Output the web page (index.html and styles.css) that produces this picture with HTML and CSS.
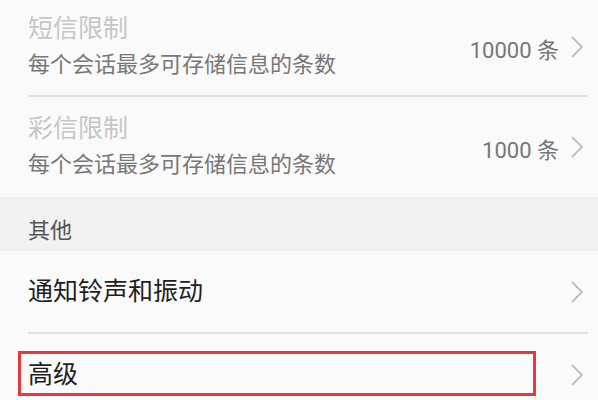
FILE: index.html
```html
<!DOCTYPE html>
<html lang="zh-CN">
<head>
<meta charset="utf-8">
<link rel="stylesheet" href="styles.css">
</head>
<body>
<div class="list">
  <div class="item two first">
    <div class="inner divided">
      <div class="text">
        <div class="title disabled">短信限制</div>
        <div class="sub">每个会话最多可存储信息的条数</div>
      </div>
      <div class="value">10000 条</div>
      <svg class="chev" width="12" height="22" viewBox="0 0 12 22"><polyline points="1,1 11,11 1,21" fill="none" stroke="#bdbdbd" stroke-width="1.8"/></svg>
    </div>
  </div>
  <div class="item two second">
    <div class="inner">
      <div class="text">
        <div class="title disabled">彩信限制</div>
        <div class="sub">每个会话最多可存储信息的条数</div>
      </div>
      <div class="value">1000 条</div>
      <svg class="chev" width="12" height="22" viewBox="0 0 12 22"><polyline points="1,1 11,11 1,21" fill="none" stroke="#bdbdbd" stroke-width="1.8"/></svg>
    </div>
  </div>
  <div class="section">其他</div>
  <div class="item one">
    <div class="inner divided">
      <div class="text"><div class="label">通知铃声和振动</div></div>
      <svg class="chev" width="12" height="22" viewBox="0 0 12 22"><polyline points="1,1 11,11 1,21" fill="none" stroke="#bdbdbd" stroke-width="1.8"/></svg>
    </div>
  </div>
  <div class="item one highlight-row">
    <div class="inner">
      <div class="text"><div class="label">高级</div></div>
      <svg class="chev" width="12" height="22" viewBox="0 0 12 22"><polyline points="1,1 11,11 1,21" fill="none" stroke="#bdbdbd" stroke-width="1.8"/></svg>
    </div>
    <div class="highlight"></div>
  </div>
</div>
</body>
</html>
```

FILE: styles.css
```css
html, body {
  margin: 0;
  padding: 0;
  background: #fafafa;
  font-family: Roboto, "Noto Sans CJK SC", sans-serif;
  overflow: hidden;
}

.list {
  display: flex;
  flex-direction: column;
}

.item {
  position: relative;
}

.inner {
  display: flex;
  align-items: center;
  margin-left: 28px;
  margin-right: 10px;
  padding-right: 5px;
  box-sizing: border-box;
}

.inner.divided {
  border-bottom: 2px solid #e1e1e1;
}

.item.first { margin-top: -1px; }
.item.first .inner { height: 98px; }
.item.second .inner { height: 100px; }
.item.one .inner { height: 83px; }
.item.highlight-row .inner { height: 81px; }

.text {
  flex: 1;
  display: flex;
  flex-direction: column;
}

.title {
  font-size: 25px;
  line-height: 34px;
}

.title.disabled { color: #c6c6c6; }

.sub {
  font-size: 22px;
  line-height: 34px;
  margin-top: 2px;
  color: #777777;
}

.value {
  font-size: 22px;
  color: #777777;
  margin-right: 12px;
  margin-top: 1px;
}

.chev {
  display: block;
  flex: none;
}

.label {
  font-size: 25px;
  line-height: 34px;
  color: #1f1f1f;
}

.section {
  height: 54px;
  box-sizing: border-box;
  background: #f1f1f1;
  display: flex;
  align-items: flex-end;
  padding: 0 0 5px 28px;
  font-size: 22px;
  line-height: 30px;
  color: #555555;
}

.highlight {
  position: absolute;
  left: 18px;
  top: 17px;
  width: 518px;
  height: 45px;
  box-sizing: border-box;
  border: 3px solid #e53a3a;
}
```
